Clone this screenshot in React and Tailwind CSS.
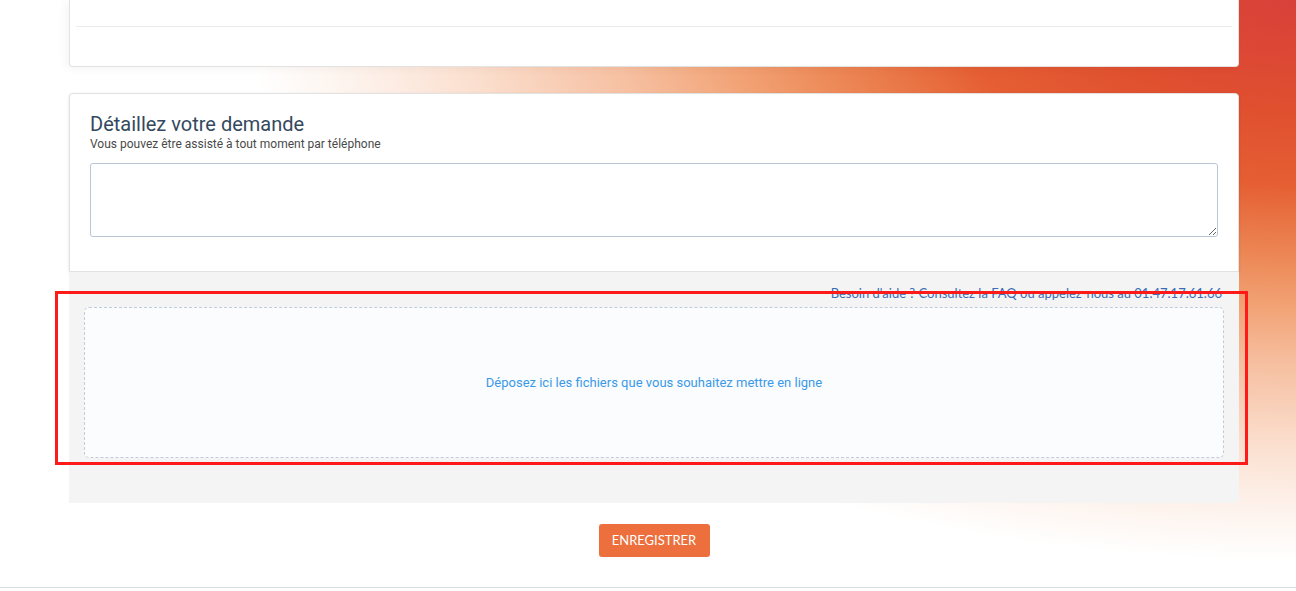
import React from 'react'

const App = () => {
  return (
    <div className="relative min-h-[591px] w-full overflow-hidden bg-white bg-[radial-gradient(ellipse_1050px_560px_at_1296px_0px,#d8403a_0%,#e0502f_20%,#e55f33_33%,#ec8553_45%,#f2a376_55%,#f6bfa0_65%,#fbe0d0_80%,#fdf1ea_90%,#ffffff_100%)] font-['Roboto',sans-serif]">
      <div className="ml-[69px] w-[1170px]">
        {/* top card, cut off by the scroll */}
        <div className="h-[67px] rounded-b-[4px] border border-t-0 border-[#e2e2e2] bg-white shadow-[-4px_2px_8px_rgba(0,0,0,0.04)]">
          <div className="h-[26px]"></div>
          <div className="mx-[6px] border-t border-[#ececec]"></div>
        </div>

        {/* details card */}
        <div className="mt-[26px] h-[179px] rounded-t-[4px] border border-[#e2e2e2] bg-white px-[20px] pt-[17px] shadow-[0_1px_3px_rgba(0,0,0,0.12)]">
          <h2 className="text-[20px] leading-[26px] text-[#34495e]">Détaillez votre demande</h2>
          <p className="text-[12px] leading-[14px] text-[#4a4a4a]">Vous pouvez être assisté à tout moment par téléphone</p>
          <textarea className="mt-[12px] block h-[74px] w-full rounded-[3px] border border-[#b9c6d6] bg-white outline-none"></textarea>
        </div>

        {/* upload area */}
        <div className="h-[231px] bg-[#f4f4f4] px-[15px] pt-[13px]">
          <div className="pr-[2px] text-right font-['Lato',sans-serif] text-[13px] leading-[16px] text-[#3a6db5]">
            Besoin d'aide ? Consultez la FAQ ou appelez-nous au 01.47.17.61.66
          </div>
          <div className="mt-[6px] flex h-[151px] items-center justify-center rounded-[5px] border border-dashed border-[#c3cbd8] bg-[#fbfcfe]">
            <span className="text-[13px] text-[#3a9ae8]">Déposez ici les fichiers que vous souhaitez mettre en ligne</span>
          </div>
        </div>

        <div className="flex justify-center pt-[21px]">
          <button className="h-[33px] w-[111px] rounded-[3px] bg-[#ec6f3d] font-['Lato',sans-serif] text-[13px] text-white">
            ENREGISTRER
          </button>
        </div>
      </div>

      <div className="mt-[30px] h-[4px] border-t border-[#dedede]"></div>

      {/* red annotation frame */}
      <div className="absolute left-[55px] top-[291px] h-[174px] w-[1193px] border-[3px] border-[#ff1a1a]"></div>
    </div>
  )
}

export default App
